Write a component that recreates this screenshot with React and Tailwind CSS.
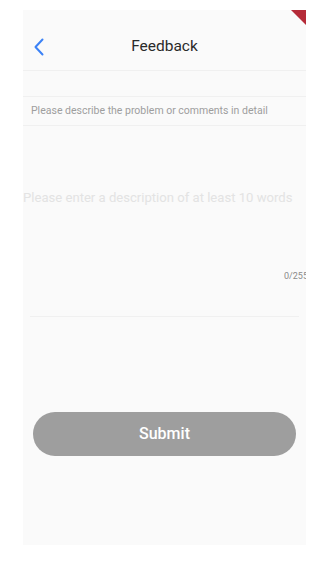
import React from "react";

export default function App() {
  return (
    <div className="w-[336px] h-[566px] bg-white overflow-hidden" style={{ fontFamily: "Roboto, 'Noto Sans', sans-serif" }}>
      <div className="relative ml-[23px] mt-[10px] w-[283px] h-[535px] bg-[#fafafa] overflow-hidden flex flex-col">
        {/* debug banner */}
        <div className="absolute top-0 right-0 w-[15px] h-[15px] bg-[#b52b38] [clip-path:polygon(0_0,100%_0,100%_100%)]" />
        {/* header */}
        <div className="relative h-[61px] flex items-center justify-center border-b border-[#f0f0f0]">
          <svg className="absolute left-[10px] top-[28px]" width="12" height="18" viewBox="0 0 12 18" fill="none">
            <path d="M9.5 1.5 L2.5 9 L9.5 16.5" stroke="#3b82f6" strokeWidth="2" strokeLinecap="round" strokeLinejoin="round" />
          </svg>
          <span className="text-[15.5px] text-[#2a2a2a] mt-[14px]">Feedback</span>
        </div>
        <div className="h-[26px] border-b border-[#f0f0f0]" />
        <div className="h-[29px] flex items-center pl-[8px] border-b border-[#f0f0f0]">
          <span className="text-[10.5px] text-[#9e9e9e]">Please describe the problem or comments in detail</span>
        </div>
        <div className="relative h-[190px]">
          <div className="pt-[62px] text-[13.1px] text-[#e3e3e3] whitespace-nowrap">Please enter a description of at least 10 words</div>
          <div className="absolute left-[261px] top-[144px] text-[9px] text-[#8a8a8a] whitespace-nowrap">0/255</div>
        </div>
        <div className="mx-[7px] h-px bg-[#f0f0f0]" />
        <div className="mt-[95px] mx-[10px] h-[44px] rounded-full bg-[#9e9e9e] flex items-center justify-center">
          <span className="text-[16px] font-medium text-white">Submit</span>
        </div>
      </div>
    </div>
  );
}
